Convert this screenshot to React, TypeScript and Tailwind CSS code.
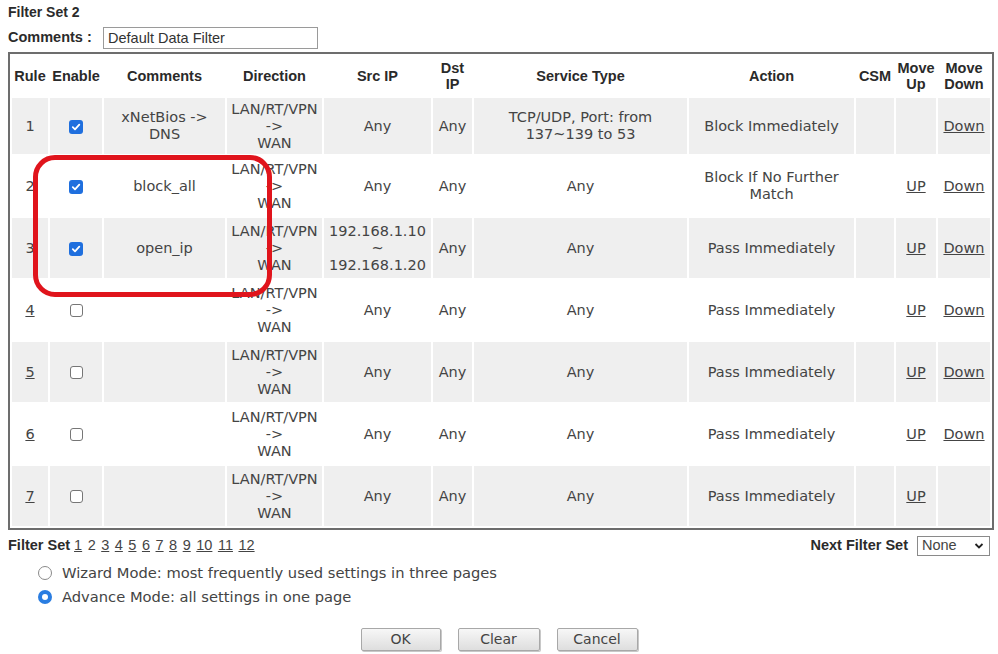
import React from "react";

const cellFont = { fontFamily: '"DejaVu Sans", Verdana, sans-serif' };
const arial = { fontFamily: '"Liberation Sans", Arial, sans-serif' };

function Check({ on }: { on: boolean }) {
  if (on)
    return (
      <span className="inline-flex w-[14px] h-[14px] rounded-[3px] bg-[#1f6fde] items-center justify-center align-middle">
        <svg width="10" height="10" viewBox="0 0 10 10">
          <path d="M1.8 5.2 L4 7.3 L8.3 2.6" stroke="white" strokeWidth="1.8" fill="none" strokeLinecap="round" strokeLinejoin="round" />
        </svg>
      </span>
    );
  return <span className="inline-block w-[13px] h-[13px] rounded-[3px] border border-[#767676] bg-white align-middle" />;
}

function Radio({ on }: { on: boolean }) {
  if (on)
    return (
      <span className="inline-flex w-[14px] h-[14px] rounded-full bg-[#2a7de1] items-center justify-center">
        <span className="w-[6px] h-[6px] rounded-full bg-white" />
      </span>
    );
  return <span className="inline-block w-[14px] h-[14px] rounded-full border border-[#8a8a8a] bg-white" />;
}

const Dir = () => (
  <>
    LAN/RT/VPN
    <br />
    -&gt;
    <br />
    WAN
  </>
);

type Row = {
  n: string;
  link: boolean;
  en: boolean;
  comment: React.ReactNode;
  src: React.ReactNode;
  svc: React.ReactNode;
  action: React.ReactNode;
  up: boolean;
  down: boolean;
};

const rows: Row[] = [
  {
    n: "1",
    link: false,
    en: true,
    comment: (
      <>
        xNetBios -&gt;
        <br />
        DNS
      </>
    ),
    src: "Any",
    svc: (
      <>
        TCP/UDP, Port: from
        <br />
        137~139 to 53
      </>
    ),
    action: "Block Immediately",
    up: false,
    down: true,
  },
  {
    n: "2",
    link: false,
    en: true,
    comment: "block_all",
    src: "Any",
    svc: "Any",
    action: (
      <>
        Block If No Further
        <br />
        Match
      </>
    ),
    up: true,
    down: true,
  },
  {
    n: "3",
    link: false,
    en: true,
    comment: "open_ip",
    src: (
      <>
        192.168.1.10
        <br />~<br />
        192.168.1.20
      </>
    ),
    svc: "Any",
    action: "Pass Immediately",
    up: true,
    down: true,
  },
  { n: "4", link: true, en: false, comment: "", src: "Any", svc: "Any", action: "Pass Immediately", up: true, down: true },
  { n: "5", link: true, en: false, comment: "", src: "Any", svc: "Any", action: "Pass Immediately", up: true, down: true },
  { n: "6", link: true, en: false, comment: "", src: "Any", svc: "Any", action: "Pass Immediately", up: true, down: true },
  { n: "7", link: true, en: false, comment: "", src: "Any", svc: "Any", action: "Pass Immediately", up: true, down: false },
];

export default function App() {
  return (
    <div className="relative w-[998px] h-[654px] bg-white text-[#333] overflow-hidden">
      <div className="pl-[8px] pt-[4px]">
        <div className="h-[17px] leading-[17px] text-[14px] font-bold text-[#2b2b2b]" style={arial}>
          Filter Set 2
        </div>
        <div className="mt-[6px] flex items-center h-[22px]">
          <span className="w-[95px] text-[14.5px] font-bold text-[#2b2b2b]" style={arial}>
            Comments :
          </span>
          <div
            className="w-[215px] h-[22px] border border-[#9a9a9a] px-[4px] text-[14.5px] leading-[20px] text-[#333]"
            style={arial}
          >
            Default Data Filter
          </div>
        </div>

        <table
          className="mt-[3px] w-[986px] table-fixed border-separate border-spacing-[2px] border-2 border-[#6d6d6d]"
          style={cellFont}
        >
          <colgroup>
            <col className="w-[36px]" />
            <col className="w-[52px]" />
            <col className="w-[121px]" />
            <col className="w-[95px]" />
            <col className="w-[107px]" />
            <col className="w-[39px]" />
            <col className="w-[213px]" />
            <col className="w-[165px]" />
            <col className="w-[38px]" />
            <col className="w-[40px]" />
            <col className="w-[52px]" />
          </colgroup>
          <thead>
            <tr className="h-[40px] text-[14.5px] font-bold text-[#2a2a2a] leading-[16px]" style={arial}>
              <th className="p-0 font-bold">Rule</th>
              <th className="p-0 font-bold">Enable</th>
              <th className="p-0 font-bold">Comments</th>
              <th className="p-0 font-bold">Direction</th>
              <th className="p-0 font-bold">Src IP</th>
              <th className="p-0 font-bold">
                Dst
                <br />
                IP
              </th>
              <th className="p-0 font-bold">Service Type</th>
              <th className="p-0 font-bold">Action</th>
              <th className="p-0 font-bold">CSM</th>
              <th className="p-0 font-bold">
                Move
                <br />
                Up
              </th>
              <th className="p-0 font-bold">
                Move
                <br />
                Down
              </th>
            </tr>
          </thead>
          <tbody>
            {rows.map((r, i) => {
              const bg = i % 2 === 0 ? "bg-[#efefef]" : "bg-white";
              const td = `p-0 text-center align-middle ${bg}`;
              return (
                <tr key={r.n} className={`${i === 0 ? "h-[56px]" : "h-[60px]"} text-[14.5px] leading-[17px] text-[#444]`}>
                  <td className={td}>
                    <span className={r.link ? "underline" : ""}>{r.n}</span>
                  </td>
                  <td className={td}>
                    <Check on={r.en} />
                  </td>
                  <td className={td}>{r.comment}</td>
                  <td className={td}>
                    <Dir />
                  </td>
                  <td className={td}>{r.src}</td>
                  <td className={td}>Any</td>
                  <td className={td}>{r.svc}</td>
                  <td className={td}>{r.action}</td>
                  <td className={td}></td>
                  <td className={td}>{r.up ? <span className="underline">UP</span> : null}</td>
                  <td className={td}>{r.down ? <span className="underline">Down</span> : null}</td>
                </tr>
              );
            })}
          </tbody>
        </table>

        <div className="mt-[6px] h-[20px] w-[982px] flex items-center justify-between text-[14.5px]" style={arial}>
          <div className="flex items-center">
            <span className="font-bold text-[#2b2b2b]">Filter Set</span>
            <span className="ml-[4px] flex gap-[5.5px] text-[#444]">
              {["1", "2", "3", "4", "5", "6", "7", "8", "9", "10", "11", "12"].map((n) => (
                <span key={n} className={n === "2" ? "" : "underline"}>
                  {n}
                </span>
              ))}
            </span>
          </div>
          <div className="flex items-center">
            <span className="font-bold text-[#2b2b2b]">Next Filter Set</span>
            <div className="ml-[9px] w-[73px] h-[20px] border border-[#8a8a8a] flex items-center justify-between pl-[4px] pr-[5px] text-[#444]">
              <span>None</span>
              <svg width="10" height="8" viewBox="0 0 10 8">
                <path d="M1.5 2 L5 5.5 L8.5 2" stroke="#222" strokeWidth="1.8" fill="none" />
              </svg>
            </div>
          </div>
        </div>

        <div className="mt-[7px] h-[20px] flex items-center pl-[30px] text-[14.7px] text-[#444]" style={cellFont}>
          <Radio on={false} />
          <span className="ml-[10px]">Wizard Mode: most frequently used settings in three pages</span>
        </div>
        <div className="mt-[4px] h-[20px] flex items-center pl-[30px] text-[14.7px] text-[#444]" style={cellFont}>
          <Radio on={true} />
          <span className="ml-[10px]">Advance Mode: all settings in one page</span>
        </div>
      </div>

      <div className="mt-[21px] flex justify-center gap-[17px] text-[14px] text-[#444]" style={cellFont}>
        <div className="w-[80px] h-[23px] flex items-center justify-center border border-[#a8a8a8] rounded-[2px] bg-gradient-to-b from-[#f7f7f7] to-[#dedede] shadow-[1px_1px_0_#c8c8c8]">
          OK
        </div>
        <div className="w-[82px] h-[23px] flex items-center justify-center border border-[#a8a8a8] rounded-[2px] bg-gradient-to-b from-[#f7f7f7] to-[#dedede] shadow-[1px_1px_0_#c8c8c8]">
          Clear
        </div>
        <div className="w-[81px] h-[23px] flex items-center justify-center border border-[#a8a8a8] rounded-[2px] bg-gradient-to-b from-[#f7f7f7] to-[#dedede] shadow-[1px_1px_0_#c8c8c8]">
          Cancel
        </div>
      </div>

      <div className="absolute left-[33px] top-[155px] w-[239px] h-[142px] border-[5px] border-[#e0141c] rounded-[22px] pointer-events-none" />
    </div>
  );
}
